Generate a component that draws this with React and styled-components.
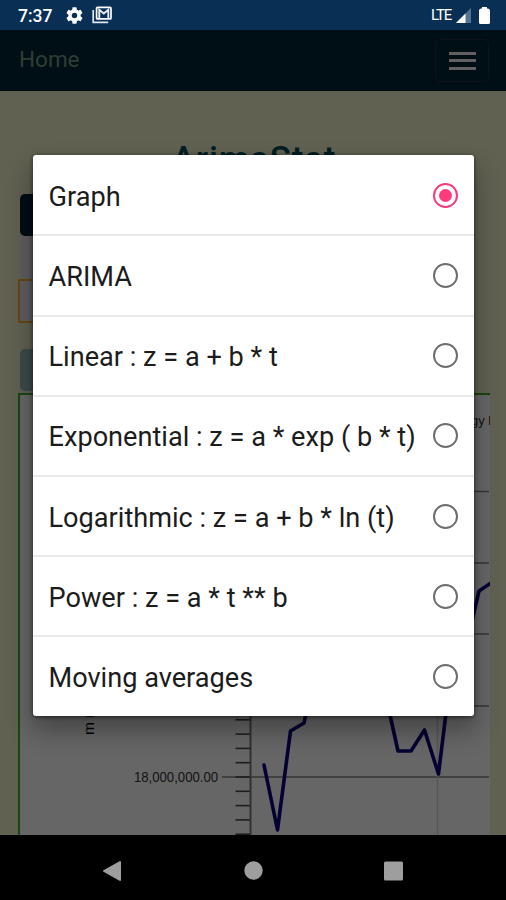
import React, { useState } from "react";
import styled, { createGlobalStyle } from "styled-components";

const GlobalStyle = createGlobalStyle`
  * {
    box-sizing: border-box;
  }
  body {
    margin: 0;
    background: #000;
    font-family: Roboto, "Liberation Sans", sans-serif;
  }
`;

const options = [
  "Graph",
  "ARIMA",
  "Linear : z = a + b * t",
  "Exponential : z = a * exp ( b * t)",
  "Logarithmic : z = a + b * ln (t)",
  "Power : z = a * t ** b",
  "Moving averages",
];

const Phone = styled.div`
  width: 506px;
  height: 900px;
  display: flex;
  flex-direction: column;
  overflow: hidden;
`;

const StatusBar = styled.div`
  height: 30px;
  flex: none;
  display: flex;
  align-items: center;
  justify-content: space-between;
  padding: 0 16px 0 18px;
  background: #0a2f55;
  color: #fff;
`;

const StatusGroup = styled.div`
  display: flex;
  align-items: center;
  gap: ${(props) => props.$gap}px;
`;

const Clock = styled.span`
  font-size: 17.5px;
  font-weight: 500;
  line-height: 30px;
  width: 35px;
  padding-top: 1px;
`;

const Network = styled.span`
  font-size: 15px;
  line-height: 30px;
  letter-spacing: -1.1px;
  width: 22px;
  margin-right: 3px;
`;

const Screen = styled.div`
  position: relative;
  flex: 1;
  min-height: 0;
  display: flex;
  flex-direction: column;
  background: #f2f2cd;
  overflow: hidden;
`;

const Navbar = styled.nav`
  height: 61px;
  flex: none;
  display: flex;
  align-items: center;
  justify-content: space-between;
  padding: 0 17px 0 19px;
  background: #002639;
`;

const Brand = styled.span`
  font-size: 22.5px;
  line-height: 30px;
  color: #6e9f80;
  padding-bottom: 3px;
`;

const Toggler = styled.div`
  width: 54px;
  height: 43px;
  display: flex;
  flex-direction: column;
  align-items: center;
  justify-content: center;
  gap: 4.5px;
  border: 1px solid #33293f;
  border-radius: 5px;
`;

const TogglerLine = styled.span`
  width: 27px;
  height: 3px;
  background: #f5f0f3;
`;

const Content = styled.div`
  flex: 1;
  min-height: 0;
  display: flex;
  flex-direction: column;
  padding: 48px 16px 0 18px;
`;

const Title = styled.h1`
  margin: 0 0 13px;
  font-size: 35px;
  font-weight: 500;
  line-height: 42px;
  height: 42px;
  letter-spacing: 0.8px;
  text-align: center;
  color: #004f59;
`;

const Field = styled.div`
  flex: none;
  width: 440px;
  height: ${(props) => props.$height}px;
  margin-left: ${(props) => (props.$outlined ? 0 : 2)}px;
  margin-bottom: ${(props) => props.$gap || 0}px;
  background: ${(props) => props.$color};
  border: ${(props) => (props.$outlined ? "2px solid #ffae2e" : "none")};
  border-radius: ${(props) => (props.$outlined ? 1 : 5)}px;
`;

const ChartPanel = styled.div`
  flex: 1;
  min-height: 0;
  background: #fff;
  border-top: 2px solid #3fae2c;
  border-left: 2px solid #3fae2c;
  overflow: hidden;

  svg {
    display: block;
  }
`;

const Backdrop = styled.div`
  position: absolute;
  inset: 0;
  display: flex;
  align-items: flex-start;
  padding: 125px 32px 0 33px;
  background: rgba(0, 0, 0, 0.6);
`;

const Dialog = styled.div`
  flex: 1;
  height: 560.5px;
  display: flex;
  flex-direction: column;
  background: #fff;
  border-radius: 3px;
  box-shadow: 0 14px 24px 2px rgba(0, 0, 0, 0.3), 0 1px 4px rgba(0, 0, 0, 0.6);
`;

const Option = styled.div`
  flex: 1;
  display: flex;
  align-items: center;
  justify-content: space-between;
  padding: 0 16px 0 15.5px;
  cursor: pointer;

  &:first-child {
    flex: none;
    height: 79.3px;
    padding-top: 2px;
  }

  & + & {
    border-top: 2px solid #e9e9e9;
  }
`;

const OptionText = styled.span`
  font-size: 27.15px;
  line-height: 36px;
  white-space: pre;
  color: #1c1c1c;
  padding-top: 3px;
`;

const Radio = styled.span`
  width: 25px;
  height: 25px;
  flex: none;
  display: flex;
  align-items: center;
  justify-content: center;
  border: 2px solid ${(props) => (props.$checked ? "#f93a76" : "#6e6e6e")};
  border-radius: 50%;

  &::after {
    content: "";
    width: 13px;
    height: 13px;
    border-radius: 50%;
    background: ${(props) => (props.$checked ? "#ff3b7b" : "transparent")};
  }
`;

const SystemBar = styled.div`
  height: 65px;
  flex: none;
  display: flex;
  align-items: center;
  justify-content: space-between;
  padding: 6px 102px 0;
  background: #000;
`;

function GearIcon() {
  return (
    <svg width="17" height="17" viewBox="2 2 20 20" fill="#fff">
      <path d="M19.14 12.94c.04-.3.06-.61.06-.94 0-.32-.02-.64-.07-.94l2.03-1.58a.49.49 0 0 0 .12-.61l-1.92-3.32a.488.488 0 0 0-.59-.22l-2.39.96c-.5-.38-1.03-.7-1.62-.94l-.36-2.54a.484.484 0 0 0-.48-.41h-3.84c-.24 0-.43.17-.47.41l-.36 2.54c-.59.24-1.13.57-1.62.94l-2.39-.96c-.22-.08-.47 0-.59.22L2.74 8.87c-.12.21-.08.47.12.61l2.03 1.58c-.05.3-.09.63-.09.94s.02.64.07.94l-2.03 1.58a.49.49 0 0 0-.12.61l1.92 3.32c.12.22.37.29.59.22l2.39-.96c.5.38 1.03.7 1.62.94l.36 2.54c.05.24.24.41.48.41h3.84c.24 0 .44-.17.47-.41l.36-2.54c.59-.24 1.13-.56 1.62-.94l2.39.96c.22.08.47 0 .59-.22l1.92-3.32c.12-.22.07-.47-.12-.61l-2.01-1.58zM12 15.2A3.2 3.2 0 1 1 12 8.8a3.2 3.2 0 0 1 0 6.4z" />
    </svg>
  );
}

function MailIcon() {
  return (
    <svg width="20" height="18" viewBox="0 0 20 18" fill="none">
      <path d="M1.2 4v12.3h15" stroke="#dfe5ec" strokeWidth="1.7" />
      <rect x="4.6" y="1.3" width="14.4" height="11.6" rx="1" stroke="#fff" strokeWidth="1.7" />
      <path d="M7.3 12.5V3.8l4.5 3.7 4.5-3.7V12.5" stroke="#e6ebf1" strokeWidth="1.9" />
    </svg>
  );
}

function SignalIcon() {
  return (
    <svg width="15" height="15" viewBox="0 0 15 15">
      <path d="M0 15L15 0V15Z" fill="#577394" />
      <path d="M0 15L9.5 5.5V15Z" fill="#fff" />
    </svg>
  );
}

function BatteryIcon() {
  return (
    <svg width="11" height="17" viewBox="0 0 11 17" fill="#fff">
      <path d="M3 0h5v1.5h1Q11 2 11 3.5V15.5Q11 17 9.5 17h-8Q0 17 0 15.5V3.5Q0 2 2 1.5H3Z" />
    </svg>
  );
}

// Distances are relative to the inner corner of the chart panel.
const gridLines = [96.5, 168, 239, 311, 382];
const ticks = Array.from({ length: 30 }, (_, i) => 439.2 - i * 14.3);

function Chart() {
  return (
    <svg width="470" height="440" viewBox="0 0 470 440">
      {gridLines.map((y) => (
        <line key={y} x1="202" x2="469" y1={y} y2={y} stroke="#858585" strokeWidth="1.6" />
      ))}
      <line x1="417.5" x2="417.5" y1="40" y2="440" stroke="#d4d4d4" strokeWidth="1.5" />
      {ticks.map((y) => (
        <line key={y} x1="215.5" x2="230.5" y1={y} y2={y} stroke="#4a4a4a" strokeWidth="1.6" />
      ))}
      <line x1="230.5" x2="230.5" y1="25" y2="440" stroke="#7a7a7a" strokeWidth="2" />
      <polyline
        points="244,370 257.5,435 270.5,336 284,328 292,290 330,190 362,285 370,320 378,356 391,356 404.5,335 418.5,379 427,310 451,230 459,196 471,188"
        fill="none"
        stroke="#0c0080"
        strokeWidth="3.6"
        strokeLinejoin="round"
        strokeLinecap="round"
      />
      <text
        x="114"
        y="386.5"
        fontSize="14"
        fontFamily="Liberation Sans, sans-serif"
        fill="#333"
        textLength="84"
        lengthAdjust="spacingAndGlyphs"
      >
        18,000,000.00
      </text>
      <text transform="translate(74 340) rotate(-90)" fontSize="15.5" fontFamily="Liberation Sans, sans-serif" fill="#000">
        m n
      </text>
      <text x="451" y="30" fontSize="13" fontFamily="Liberation Sans, sans-serif" fill="#333">
        gy l
      </text>
    </svg>
  );
}

export default function App() {
  const [selected, setSelected] = useState("Graph");

  return (
    <Phone>
      <GlobalStyle />
      <StatusBar>
        <StatusGroup $gap={13}>
          <Clock>7:37</Clock>
          <StatusGroup $gap={9}>
            <GearIcon />
            <MailIcon />
          </StatusGroup>
        </StatusGroup>
        <StatusGroup $gap={0}>
          <Network>LTE</Network>
          <StatusGroup $gap={8}>
            <SignalIcon />
            <BatteryIcon />
          </StatusGroup>
        </StatusGroup>
      </StatusBar>

      <Screen>
        <Navbar>
          <Brand>Home</Brand>
          <Toggler>
            <TogglerLine />
            <TogglerLine />
            <TogglerLine />
          </Toggler>
        </Navbar>
        <Content>
          <Title>ArimaStat</Title>
          <Field $height={42} $color="#002238" />
          <Field $height={42} $color="#ebe6ef" $gap={1} />
          <Field $height={44} $color="#ebe6ef" $outlined $gap={26} />
          <Field $height={42} $color="#9ab9b9" $gap={2} />
          <ChartPanel>
            <Chart />
          </ChartPanel>
        </Content>

        <Backdrop>
          <Dialog role="radiogroup">
            {options.map((label) => (
              <Option
                key={label}
                role="radio"
                aria-checked={selected === label}
                onClick={() => setSelected(label)}
              >
                <OptionText>{label}</OptionText>
                <Radio $checked={selected === label} />
              </Option>
            ))}
          </Dialog>
        </Backdrop>
      </Screen>

      <SystemBar>
        <svg width="20" height="22" viewBox="0 0 20 22">
          <path d="M18 2V20L2 11Z" fill="#9e9e9e" stroke="#9e9e9e" strokeWidth="2" strokeLinejoin="round" />
        </svg>
        <svg width="19" height="19" viewBox="0 0 19 19">
          <circle cx="9.5" cy="9.5" r="9.2" fill="#9e9e9e" />
        </svg>
        <svg width="20" height="20" viewBox="0 0 20 20">
          <rect x="0" y="0.5" width="19" height="19" rx="1.5" fill="#9e9e9e" />
        </svg>
      </SystemBar>
    </Phone>
  );
}
